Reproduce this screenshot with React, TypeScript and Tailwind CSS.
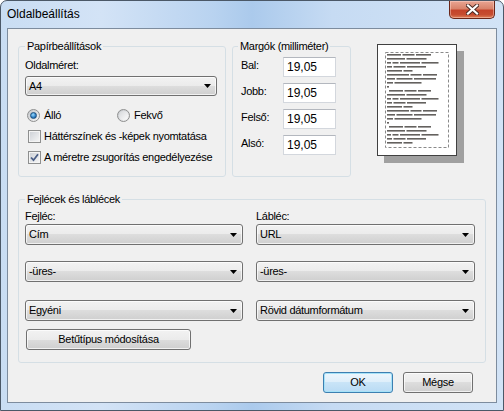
import React from "react";

// each line of the tiny page preview: start x, word widths
const previewLines: [number, number[]][] = [
  [9, [14, 12, 15]], [9, [18, 20]], [9, [4, 6, 20, 17]], [9, [5, 12, 19]], [9, [15, 9]], [9, [22, 11, 14]], [9, [8, 16, 22]], [9, [6, 27]], [9, [2]],
  [11, [14, 12, 13]], [9, [18, 20]], [9, [4, 6, 20, 17]], [9, [5, 12, 19]], [9, [15, 9]], [9, [22, 11, 14]], [9, [8, 16, 22]], [9, [6, 27]], [9, [2]],
  [11, [14, 12, 13]], [9, [18, 20]], [9, [4, 6, 20, 17]], [9, [5, 12, 19]], [9, [15, 9]],
];

function Arrow() {
  return (
    <svg width="7" height="4" viewBox="0 0 7 4">
      <polygon points="0,0 7,0 3.5,4" fill="#000" />
    </svg>
  );
}

function Combo({ value, className }: { value: string; className: string }) {
  return (
    <div
      className={`flex items-center justify-between rounded-[3px] border border-[#707070] bg-[linear-gradient(to_bottom,#f2f2f2_0%,#ebebeb_50%,#dddddd_50%,#cfcfcf_100%)] pl-[3px] pr-[5px] shadow-[inset_0_0_0_1px_rgba(255,255,255,0.7)] ${className}`}
    >
      <span>{value}</span>
      <Arrow />
    </div>
  );
}

function Radio({ checked }: { checked?: boolean }) {
  return (
    <span className="flex h-[13px] w-[13px] shrink-0 items-center justify-center rounded-full border border-[#8e8f8f] bg-[linear-gradient(135deg,#c4c7cb,#f6f6f6)]">
      {checked ? (
        <span className="h-[7px] w-[7px] rounded-full border border-[#1c5180] bg-[radial-gradient(circle_at_40%_35%,#9adcff,#2c7cc2_60%,#0e4a86)]" />
      ) : (
        <span className="h-[9px] w-[9px] rounded-full bg-[linear-gradient(135deg,#d6d8db,#fcfcfc)]" />
      )}
    </span>
  );
}

function Check({ checked }: { checked?: boolean }) {
  return (
    <span className="flex h-[13px] w-[13px] shrink-0 items-center justify-center border border-[#8e8f8f] bg-[linear-gradient(135deg,#cbcfd5,#f7f7f7)] shadow-[inset_0_0_0_1px_#f4f4f4]">
      {checked && (
        <svg width="11" height="11" viewBox="0 0 11 11">
          <path d="M2 5.5 L4.5 8.2 L9 2.2" fill="none" stroke="#4a5e86" strokeWidth="1.8" />
        </svg>
      )}
    </span>
  );
}

function Margin({ label }: { label: string }) {
  return (
    <div className="flex items-start">
      <span className="mt-[2px] w-[42px] leading-[13px]">{label}</span>
      <div className="flex h-[20px] w-[53px] items-center border border-[#d3d7dd] border-t-[#b3b7be] bg-white pl-[3px] text-[12px] tracking-normal">
        19,05
      </div>
    </div>
  );
}

function Button({ label, className }: { label: string; className: string }) {
  return (
    <div
      className={`flex h-[21px] items-center justify-center rounded-[3px] border border-[#707070] bg-[linear-gradient(to_bottom,#f2f2f2_0%,#ebebeb_50%,#dddddd_50%,#cfcfcf_100%)] shadow-[inset_0_0_0_1px_rgba(255,255,255,0.7)] ${className}`}
    >
      {label}
    </div>
  );
}

function PagePreview() {
  return (
    <svg width="78" height="110" viewBox="0 0 78 110">
      <rect x="7.5" y="7.5" width="63" height="95" fill="none" stroke="#8a8a8a" strokeDasharray="3 2" />
      {previewLines.map(([start, words], i) => {
        let x = start;
        return words.map((w, j) => {
          const r = <rect key={`${i}-${j}`} x={x} y={9 + i * 4} width={w} height="1.6" fill="#3d3a36" opacity="0.8" />;
          x += w + 1.5;
          return r;
        });
      })}
    </svg>
  );
}

export default function App() {
  return (
    <div className="h-[411px] w-[504px] overflow-hidden rounded-t-[7px] border border-[#4b5867] bg-[linear-gradient(to_right,#c9ddf3,#d3e3f6_20%,#b9d3f0_42%,#abcaec_50%,#c6dbf3_66%,#d2e3f6)] font-['Liberation_Sans',Arial,sans-serif] text-[11px] tracking-[-0.3px] text-black">
      {/* title bar */}
      <div className="flex h-[27px] justify-between">
        <span className="self-center pb-[1px] pl-[6px] text-[12px] tracking-normal">Oldalbeállítás</span>
        <div className="mr-[8px] flex h-[18px] w-[46px] items-center justify-center rounded-b-[5px] border border-t-0 border-[#6a2619] bg-[linear-gradient(to_bottom,#e9a593_0%,#d8836b_45%,#c4432a_55%,#c64d31_80%,#de7f57_100%)] shadow-[inset_0_0_0_1px_rgba(255,220,210,0.45)]">
          <svg width="13" height="11" viewBox="0 0 13 11">
            <path d="M2 1.5 L11 9.5 M11 1.5 L2 9.5" stroke="#4a2a24" strokeWidth="4" strokeLinecap="square" />
            <path d="M2 1.5 L11 9.5 M11 1.5 L2 9.5" stroke="#ffffff" strokeWidth="2.2" strokeLinecap="square" />
          </svg>
        </div>
      </div>

      {/* client */}
      <div className="mx-[6px] h-[375px] border border-[#7d8c9e] bg-[#f0f0f0] pl-[10px] pt-[10px]">
        <div className="flex items-start">
          <fieldset className="h-[138px] w-[208px] rounded-[3px] border border-[#d5dfe5]">
            <legend className="ml-[6px] px-[2px] leading-[14px]">Papírbeállítások</legend>
            <div className="pl-[6px]">
              <div className="mt-[6px] leading-[13px]">Oldalméret:</div>
              <Combo value="A4" className="mt-[4px] h-[20px] w-[192px]" />
              <div className="mt-[13px] flex h-[13px] items-center">
                <div className="ml-[2px] flex w-[90px] items-center gap-[4px]">
                  <Radio checked />
                  <span>Álló</span>
                </div>
                <div className="flex items-center gap-[4px]">
                  <Radio />
                  <span>Fekvő</span>
                </div>
              </div>
              <div className="ml-[3px] mt-[8px] flex h-[13px] items-center gap-[3px]">
                <Check />
                <span>Háttérszínek és -képek nyomtatása</span>
              </div>
              <div className="ml-[3px] mt-[8px] flex h-[13px] items-center gap-[3px]">
                <Check checked />
                <span>A méretre zsugorítás engedélyezése</span>
              </div>
            </div>
          </fieldset>

          <fieldset className="ml-[6px] h-[138px] w-[119px] rounded-[3px] border border-[#d5dfe5]">
            <legend className="ml-[5px] px-[2px] leading-[14px]">Margók (milliméter)</legend>
            <div className="flex flex-col gap-[6px] pl-[8px] pt-[4px]">
              <Margin label="Bal:" />
              <Margin label="Jobb:" />
              <Margin label="Felső:" />
              <Margin label="Alsó:" />
            </div>
          </fieldset>

          <div className="ml-[26px] mt-[5px] h-[112px] w-[80px] border border-[#404040] bg-white shadow-[7px_7px_0_#a0a0a0]">
            <PagePreview />
          </div>
        </div>

        <fieldset className="mt-[15px] h-[171px] w-[468px] rounded-[3px] border border-[#d5dfe5]">
          <legend className="ml-[6px] px-[2px] leading-[14px]">Fejlécek és láblécek</legend>
          <div className="flex gap-[13px] pl-[6px] pt-[4px]">
            <div className="flex w-[218px] flex-col">
              <div className="leading-[13px]">Fejléc:</div>
              <Combo value="Cím" className="mt-[1px] h-[21px]" />
              <Combo value="-üres-" className="mt-[16px] h-[21px]" />
              <Combo value="Egyéni" className="mt-[18px] h-[21px]" />
              <Button label="Betűtípus módosítása" className="ml-[1px] mt-[8px] w-[165px]" />
            </div>
            <div className="flex w-[219px] flex-col">
              <div className="leading-[13px]">Lábléc:</div>
              <Combo value="URL" className="mt-[1px] h-[21px]" />
              <Combo value="-üres-" className="mt-[16px] h-[21px]" />
              <Combo value="Rövid dátumformátum" className="mt-[18px] h-[21px]" />
            </div>
          </div>
        </fieldset>

        <div className="mt-[9px] flex justify-end gap-[10px] pr-[23px]">
          <div className="flex h-[21px] w-[70px] items-center justify-center rounded-[3px] border border-[#3c7fb1] bg-[linear-gradient(to_bottom,#edf6fd_0%,#ddeefa_50%,#c9e4f7_50%,#b9dbf4_100%)] shadow-[inset_0_0_0_1px_#a6e2f8]">
            OK
          </div>
          <Button label="Mégse" className="w-[70px]" />
        </div>
      </div>
    </div>
  );
}
